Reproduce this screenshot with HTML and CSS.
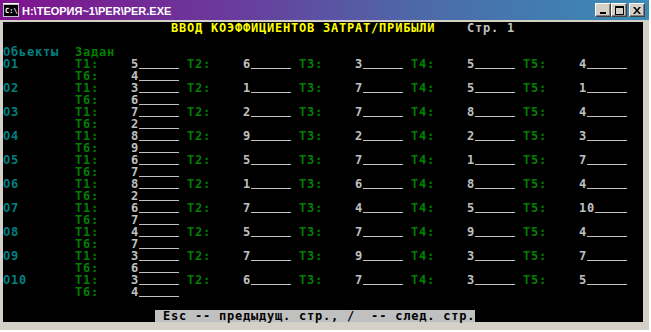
FILE: index.html
```html
<!DOCTYPE html>
<html lang="ru">
<head>
    <meta charset="UTF-8" />
    <title>PER.EXE</title>
    <link rel="stylesheet" href="styles.css">
</head>
<body>
    <div class="window">
        <!-- Заголовок окна -->
        <div class="titlebar">
            <svg class="app-icon" width="16" height="14" viewBox="0 0 16 14">
                <rect x="0" y="0" width="16" height="14" fill="#c0c0c0"/>
                <rect x="0" y="0" width="16" height="1" fill="#ffffff"/>
                <rect x="1" y="2" width="14" height="11" fill="#000000"/>
                <text x="2" y="10" fill="#ffffff" font-family="DejaVu Sans Mono" font-weight="bold" font-size="7">C:\</text>
            </svg>
            <span class="title">H:\ТЕОРИЯ~1\PER\PER.EXE</span>
            <div class="controls">
                <span class="ctl">
                    <svg width="8" height="7" viewBox="0 0 8 7"><rect x="1" y="5" width="6" height="2" fill="#000"/></svg>
                </span>
                <span class="ctl">
                    <svg width="9" height="9" viewBox="0 0 9 9"><rect x="0.5" y="0.5" width="8" height="8" fill="none" stroke="#000"/><rect x="0" y="0" width="9" height="2" fill="#000"/></svg>
                </span>
                <span class="ctl close">
                    <svg width="8" height="7" viewBox="0 0 8 7"><path d="M0 0h2l2 2.5 2-2.5h2l-3 3.5 3 3.5h-2l-2-2.5-2 2.5h-2l3-3.5z" fill="#000"/></svg>
                </span>
            </div>
        </div>

        <!-- Консоль -->
        <div class="console">
            <div class="head-row">
                <span class="yellow">ВВОД КОЭФФИЦИЕНТОВ ЗАТРАТ/ПРИБЫЛИ</span>
                <span class="gray">Стр. 1</span>
            </div>

            <div class="caption-row">
                <span class="cyan">Обьекты</span>
                <span class="green">Задан</span>
            </div>

            <div class="table" id="table"></div>

            <div class="status"> Esc -- предыдущ. стр., /  -- след. стр.</div>
        </div>
    </div>

    <script>
        // Коэффициенты T1..T5 и T6 для каждого объекта
        const data = [
            [5, 6, 3, 5, 4, 4],
            [3, 1, 7, 5, 1, 6],
            [7, 2, 7, 8, 4, 2],
            [8, 9, 2, 2, 3, 9],
            [6, 5, 7, 1, 7, 7],
            [8, 1, 6, 8, 4, 2],
            [6, 7, 4, 5, 10, 7],
            [4, 5, 7, 9, 4, 7],
            [3, 7, 9, 3, 7, 6],
            [3, 6, 7, 3, 5, 4]
        ];

        const table = document.getElementById("table");

        function field(v) {
            const len = 6 - String(v).length;
            return '<span class="val"><span class="num">' + v + '</span><span class="line len' + len + '"></span></span>';
        }

        data.forEach(function(row, i) {
            let html = '<div class="obj"><span class="cyan">О' + (i + 1) + '</span>';
            for (let t = 0; t < 5; t++) {
                html += '<span class="green">T' + (t + 1) + ':</span>' + field(row[t]);
            }
            html += '<span class="green t6">T6:</span>' + field(row[5]) + '</div>';
            table.insertAdjacentHTML("beforeend", html);
        });
    </script>
</body>
</html>
```

FILE: styles.css
```css
:root {
    --cell: 8px;
    --row: 12px;
    --frame: #d4d0c8;
    --cyan: #008080;
    --green: #008000;
    --gray: #c0c0c0;
    --yellow: #ffff00;
}

* {
    margin: 0;
    padding: 0;
    box-sizing: border-box;
}

body {
    background: var(--frame);
    width: 651px;
    height: 332px;
    overflow: hidden;
}

.window {
    width: 651px;
    height: 332px;
    background: var(--frame);
    border-right: 2px solid #ffffff;
    border-bottom: 2px solid #ffffff;
}

.titlebar {
    height: 20px;
    display: flex;
    align-items: center;
    padding-left: 3px;
    background: linear-gradient(90deg, #80128e 0%, #6a3a9c 35%, #4c6aa8 65%, #3a8cb6 100%);
}

.app-icon {
    display: block;
    margin-right: 3px;
}

.title {
    color: #ffffff;
    font-family: "Liberation Sans", Arial, sans-serif;
    font-weight: bold;
    font-size: 11px;
    line-height: 14px;
    padding-top: 1px;
}

.controls {
    margin-left: auto;
    margin-right: 4px;
    display: flex;
}

.ctl {
    width: 16px;
    height: 14px;
    display: flex;
    align-items: center;
    justify-content: center;
    background: var(--frame);
    border-top: 1px solid #ffffff;
    border-left: 1px solid #ffffff;
    border-right: 1px solid #404040;
    border-bottom: 1px solid #404040;
    box-shadow: inset -1px -1px 0 #808080;
}

.ctl svg {
    display: block;
}

.ctl.close {
    margin-left: 2px;
}

.console {
    margin: 2px 0 0 3px;
    width: 640px;
    height: 300px;
    background: #000000;
    font-family: "DejaVu Sans Mono", "Liberation Mono", monospace;
    font-weight: bold;
    font-size: 12px;
    line-height: var(--row);
    letter-spacing: 0.78px;
    color: var(--gray);
}

.cyan { color: var(--cyan); }
.green { color: var(--green); }
.gray { color: var(--gray); }
.yellow { color: var(--yellow); }

.head-row {
    display: grid;
    grid-template-columns: calc(var(--cell) * 37) auto;
    padding-left: calc(var(--cell) * 21);
    height: var(--row);
}

.caption-row {
    display: grid;
    grid-template-columns: calc(var(--cell) * 9) auto;
    margin-top: var(--row);
    height: var(--row);
}

.obj {
    display: grid;
    grid-template-columns: calc(var(--cell) * 9) repeat(10, calc(var(--cell) * 7));
    grid-template-rows: var(--row) var(--row);
}

.obj .t6 {
    grid-column: 2;
}

.val {
    display: flex;
    align-items: flex-start;
}

.line {
    height: 11px;
    border-bottom: 1px solid var(--gray);
}

.len5 { width: calc(var(--cell) * 5); }
.len4 { width: calc(var(--cell) * 4); }

.status {
    margin: var(--row) 0 0 calc(var(--cell) * 19);
    width: calc(var(--cell) * 40);
    height: var(--row);
    background: var(--gray);
    color: #000000;
    white-space: pre;
}
```
